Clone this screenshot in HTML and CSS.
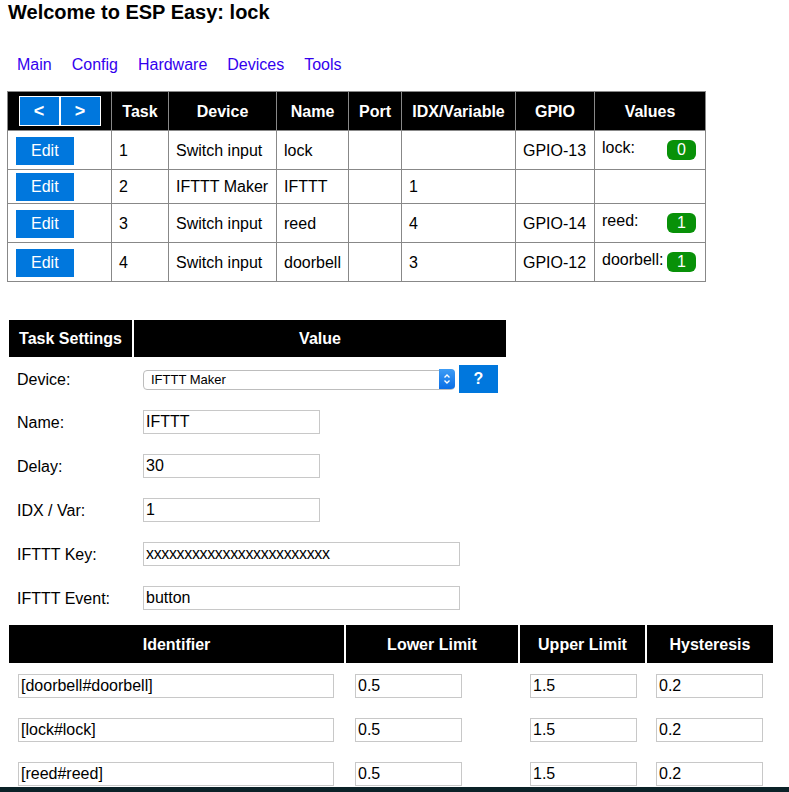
FILE: index.html
```html
<!DOCTYPE html>
<html lang="en">
<head>
    <meta charset="UTF-8">
    <meta name="viewport" content="width=device-width, initial-scale=1.0">
    <title>ESP Easy: lock</title>
    <link rel="stylesheet" href="styles.css">
</head>
<body>
    <h1>Welcome to ESP Easy: lock</h1>
    <div class="menu">
        <a href="#">Main</a>
        <a href="#">Config</a>
        <a href="#">Hardware</a>
        <a href="#">Devices</a>
        <a href="#">Tools</a>
    </div>

    <table class="devices">
        <colgroup>
            <col class="c-edit"><col class="c-task"><col class="c-device"><col class="c-name">
            <col class="c-port"><col class="c-idx"><col class="c-gpio"><col class="c-values">
        </colgroup>
        <tr>
            <th><a class="page-btn" href="#">&lt;</a><a class="page-btn" href="#">&gt;</a></th>
            <th>Task</th>
            <th>Device</th>
            <th>Name</th>
            <th>Port</th>
            <th>IDX/Variable</th>
            <th>GPIO</th>
            <th>Values</th>
        </tr>
        <tr>
            <td><a class="button" href="#">Edit</a></td>
            <td>1</td>
            <td>Switch input</td>
            <td>lock</td>
            <td></td>
            <td></td>
            <td>GPIO-13</td>
            <td><div class="val"><div class="val-l">lock:</div><div class="val-r">0</div></div></td>
        </tr>
        <tr>
            <td><a class="button" href="#">Edit</a></td>
            <td>2</td>
            <td>IFTTT Maker</td>
            <td>IFTTT</td>
            <td></td>
            <td>1</td>
            <td></td>
            <td></td>
        </tr>
        <tr>
            <td><a class="button" href="#">Edit</a></td>
            <td>3</td>
            <td>Switch input</td>
            <td>reed</td>
            <td></td>
            <td>4</td>
            <td>GPIO-14</td>
            <td><div class="val"><div class="val-l">reed:</div><div class="val-r">1</div></div></td>
        </tr>
        <tr>
            <td><a class="button" href="#">Edit</a></td>
            <td>4</td>
            <td>Switch input</td>
            <td>doorbell</td>
            <td></td>
            <td>3</td>
            <td>GPIO-12</td>
            <td><div class="val"><div class="val-l">doorbell:</div><div class="val-r">1</div></div></td>
        </tr>
    </table>

    <table class="settings">
        <tr>
            <th class="s-label">Task Settings</th>
            <th class="s-value">Value</th>
        </tr>
        <tr class="device-row">
            <td>Device:</td>
            <td>
                <div class="device-pick">
                    <span class="select">
                        <select>
                            <option>IFTTT Maker</option>
                        </select>
                        <span class="stepper">
                            <svg width="16" height="20" viewBox="0 0 16 20">
                                <path d="M5.5 8.5 L8 6 L10.5 8.5 M5.5 11.5 L8 14 L10.5 11.5" fill="none" stroke="white" stroke-width="1.4"/>
                            </svg>
                        </span>
                    </span>
                    <a class="help" href="#">?</a>
                </div>
            </td>
        </tr>
        <tr>
            <td>Name:</td>
            <td><input class="w-short" type="text" value="IFTTT"></td>
        </tr>
        <tr>
            <td>Delay:</td>
            <td><input class="w-short" type="text" value="30"></td>
        </tr>
        <tr>
            <td>IDX / Var:</td>
            <td><input class="w-short" type="text" value="1"></td>
        </tr>
        <tr>
            <td>IFTTT Key:</td>
            <td><input class="w-long key" type="text" value="xxxxxxxxxxxxxxxxxxxxxxxx"></td>
        </tr>
        <tr>
            <td>IFTTT Event:</td>
            <td><input class="w-long" type="text" value="button"></td>
        </tr>
    </table>

    <table class="limits">
        <tr>
            <th class="l-id">Identifier</th>
            <th class="l-low">Lower Limit</th>
            <th class="l-up">Upper Limit</th>
            <th class="l-hys">Hysteresis</th>
        </tr>
        <tr>
            <td><input class="w-id" type="text" value="[doorbell#doorbell]"></td>
            <td><input class="w-num" type="text" value="0.5"></td>
            <td><input class="w-num up" type="text" value="1.5"></td>
            <td><input class="w-num" type="text" value="0.2"></td>
        </tr>
        <tr>
            <td><input class="w-id" type="text" value="[lock#lock]"></td>
            <td><input class="w-num" type="text" value="0.5"></td>
            <td><input class="w-num up" type="text" value="1.5"></td>
            <td><input class="w-num" type="text" value="0.2"></td>
        </tr>
        <tr>
            <td><input class="w-id" type="text" value="[reed#reed]"></td>
            <td><input class="w-num" type="text" value="0.5"></td>
            <td><input class="w-num up" type="text" value="1.5"></td>
            <td><input class="w-num" type="text" value="0.2"></td>
        </tr>
    </table>

    <div class="screen-edge"></div>
</body>
</html>
```

FILE: styles.css
```css
body {
    font-family: "Liberation Sans", Arial, sans-serif;
    font-size: 16px;
    margin: 0;
    padding: 0 7px;
    color: black;
    background-color: white;
}
h1 {
    font-size: 20px;
    line-height: 24px;
    margin: 0 0 0 1px;
}
.menu {
    display: flex;
    gap: 20px;
    margin: 32px 0 17px;
    padding-left: 10px;
    line-height: 18px;
}
.menu a {
    color: #3300ee;
    text-decoration: none;
}

/* device list */
.devices {
    border-collapse: collapse;
    table-layout: fixed;
    width: 699px;
    margin-bottom: 36px;
}
.c-edit { width: 104px; }
.c-task { width: 57px; }
.c-device { width: 108px; }
.c-name { width: 72px; }
.c-port { width: 53px; }
.c-idx { width: 114px; }
.c-gpio { width: 79px; }
.c-values { width: 111px; }
.devices th, .devices td {
    border: 1px solid #888;
}
.devices th {
    background-color: black;
    color: white;
    padding: 4px 0;
    line-height: 19px;
    white-space: nowrap;
}
.devices td {
    padding: 7px;
    line-height: 19px;
    white-space: nowrap;
}
.page-btn {
    display: inline-block;
    width: 39px;
    height: 28px;
    line-height: 28px;
    border: 1px solid white;
    background-color: #0077dd;
    color: white;
    font-size: 18px;
    text-decoration: none;
    vertical-align: middle;
}
.button {
    margin-left: 1px;
    padding: 5px 15px 6px;
    background-color: #0077dd;
    color: white;
    text-decoration: none;
}
.val::after {
    content: "";
    display: block;
    clear: both;
}
.val-l {
    float: left;
}
.val-r {
    float: right;
    margin: 2px;
    padding: 1px 10px;
    line-height: 18px;
    border-radius: 6px;
    background-color: #089108;
    color: white;
}

/* task settings */
.settings, .limits {
    border-collapse: separate;
    border-spacing: 2px;
    table-layout: fixed;
}
.settings th, .limits th {
    box-sizing: border-box;
    background-color: black;
    color: white;
    line-height: 19px;
    padding: 9px 8px;
}
.limits th {
    padding: 10px 8px 9px;
}
.settings td, .limits td {
    padding: 9px 8px;
    line-height: 19px;
    vertical-align: middle;
}
.s-label { width: 123px; }
.s-value { width: 372px; }
.device-row td {
    padding: 6px 8px;
}
.device-pick {
    display: flex;
    align-items: center;
    height: 28px;
    margin-left: 1px;
}
.select {
    position: relative;
    display: block;
    width: 312px;
    height: 20px;
}
.select select {
    -webkit-appearance: none;
    appearance: none;
    box-sizing: border-box;
    width: 100%;
    height: 20px;
    margin: 0;
    padding: 0 0 0 7px;
    border: 1px solid #bdbdbd;
    border-radius: 4px;
    background-color: white;
    font-family: "Liberation Sans", Arial, sans-serif;
    font-size: 13px;
    color: black;
}
.stepper {
    position: absolute;
    top: 0;
    right: 0;
    width: 16px;
    height: 20px;
    border-radius: 0 4px 4px 0;
    background: linear-gradient(#3d9cf5, #0a6ee6);
}
.stepper svg {
    display: block;
}
.help {
    display: block;
    width: 39px;
    height: 28px;
    line-height: 28px;
    margin-left: 4px;
    background-color: #0077dd;
    color: white;
    font-weight: bold;
    text-align: center;
    text-decoration: none;
}
input {
    display: block;
    box-sizing: border-box;
    height: 24px;
    margin: 0 0 0 1px;
    padding: 0 2px;
    border: 1px solid #c8c8c8;
    font-family: "Liberation Sans", Arial, sans-serif;
    font-size: 16px;
    color: black;
}
.w-short { width: 177px; }
.w-long { width: 317px; }
.key { letter-spacing: -0.35px; }

/* limits */
.limits {
    margin-top: 2px;
}
.l-id { width: 335px; }
.l-low { width: 172px; }
.l-up { width: 125px; }
.l-hys { width: 126px; }
.w-id { width: 316px; }
.w-num { width: 107px; }
.w-num.up { margin-left: 2px; }

.screen-edge {
    position: fixed;
    left: 0;
    right: 0;
    bottom: 0;
    height: 5px;
    background-color: #0b2228;
}
```
